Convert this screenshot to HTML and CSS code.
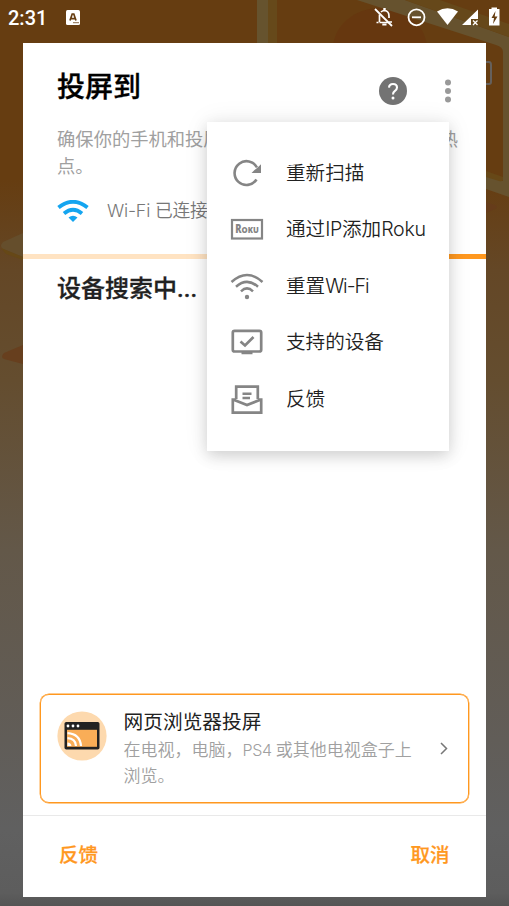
FILE: index.html
```html
<!DOCTYPE html>
<html lang="zh-CN">
<head>
<meta charset="utf-8">
<title>投屏到</title>
<link rel="stylesheet" href="styles.css">
</head>
<body>
<div class="screen">
  <svg class="backdrop" viewBox="0 0 509 906" aria-hidden="true">
    <path d="M268 0H277V43H268Z" fill="#66491a"/>
    <path d="M257 0H268V43H257Z" fill="#66532e"/>
    <ellipse cx="380" cy="49" rx="47" ry="41" fill="#66370f"/>
    <path d="M357 0H405L509 37V197L486 189V175L503 181V52Q503 47 496 45Z" fill="#66522e"/>
    <path d="M405 0H440L509 24V37Z" fill="#66481a"/>
    <path d="M480 62H489Q491 62 491 65V82Q491 84 489 84H480" fill="none" stroke="#65605c" stroke-width="2"/>
    <path d="M486 171L503 177V180Q502 182 499 181L486 177Z" fill="#674817"/>
    <path d="M486 202L495 205Q499 207 495 209L486 213Z" fill="#663c1a"/>
    <path d="M23 233L3 242Q-1 246 3 249L23 257Z" fill="#654e2c"/>
    <path d="M1 248L23 257V260L6 254Z" fill="#664817"/>
    <path d="M23 345L4 353Q0 357 4 359L23 364Z" fill="#673f1e"/>
  </svg>

  <header class="status">
    <span class="time">2:31</span>
    <svg class="app" width="14" height="15" viewBox="0 0 14 15"><rect width="14" height="15" rx="1.5" fill="#fff"/><path d="M4 10.5L6.2 4H7.8L10 10.5M5 8.6H9" fill="none" stroke="#663d11" stroke-width="1.7"/><path d="M7 12.7H13" stroke="#8a6b4a"/></svg>
    <svg class="indicators" width="130" height="22" viewBox="370 6 130 22" fill="none" stroke="#fff">
      <path d="M379.5 22.500H389M378.500 22.500H376.500M379.500 22V14.500M381 12Q382.500 10.500 384.500 10.500Q389 11 389 16V18M389 22H392" stroke-width="1.7"/>
      <path d="M375 9L392 26" stroke-width="1.8"/>
      <path d="M384.500 8V11" stroke-width="2.4"/><path d="M382.300 24.500H386.500" stroke-width="2"/>
      <circle cx="416.500" cy="17.300" r="8" stroke-width="1.8"/><path d="M412 17.300H421" stroke-width="1.8"/>
      <path d="M437 11.500Q447.500 4.800 458 11.500L447.500 25Z" fill="#fff" stroke="none"/>
      <path d="M462 25L478 9.500V19H471V25Z" fill="#fff" stroke="none"/><path d="M473 20.500L477.500 25M477.500 20.500L473 25" stroke-width="1.3"/>
      <path d="M489 9H491.500V7.500H497V9H499.500V25.500H489Z" fill="#fff" stroke="none"/><path d="M495.500 11L491.500 18H494L493 24L497.500 16.500H494.700Z" fill="#663d11" stroke="none"/>
    </svg>
  </header>

  <main class="dialog">
    <section class="heading">
      <h1>投屏到</h1>
      <div class="actions">
        <svg width="28" height="28" viewBox="0 0 28 28"><circle cx="14" cy="14" r="14" fill="#737373"/><path d="M10 10.600Q10.200 7 14 7Q18 7 18 10.500Q18 12.500 15.700 14.200Q14 15.500 14 17.500" fill="none" stroke="#fff" stroke-width="2.100"/><circle cx="14" cy="21" r="1.500" fill="#fff"/></svg>
        <svg width="6" height="24" viewBox="0 0 6 24" fill="#999"><circle cx="3" cy="3.500" r="3"/><circle cx="3" cy="12" r="3"/><circle cx="3" cy="20.500" r="3"/></svg>
      </div>
    </section>
    <div class="hint">
      <p class="spread"><span>确保你的手机和投屏设备连接到同一</span><span>Wi-Fi或者热</span></p>
      <p>点。</p>
    </div>
    <div class="network">
      <svg width="32" height="22" viewBox="0 0 32 22" fill="none" stroke="#14a5f0"><path d="M1.500 7.500Q16-4 30.500 7.500" stroke-width="3.800"/><path d="M7 13.500Q16 6 25 13.500" stroke-width="3.800"/><path d="M11.500 17.500Q16 14 20.500 17.500L16 22Z" fill="#14a5f0" stroke="none"/></svg>
      <span>Wi-Fi 已连接</span>
    </div>
    <div class="progress"></div>
    <h2>设备搜索中...</h2>

    <section class="browser">
      <svg class="cast" width="50" height="50" viewBox="0 0 50 50"><circle cx="25" cy="25" r="24.600" fill="#fdd9ae"/><rect x="7.500" y="11" width="35" height="27.500" rx="1.800" fill="#222"/><rect x="10" y="18.800" width="30" height="17" fill="#f9ad57"/><g fill="#fff"><circle cx="11" cy="15" r="1.400"/><circle cx="16" cy="15" r="1.400"/><circle cx="21" cy="15" r="1.400"/><path d="M10.500 31.500Q14 31.500 14.500 35H10.500Z"/></g><path d="M10.500 27.200Q18.500 27.500 19 35M10.500 22.200Q23 23 24 35" fill="none" stroke="#fff" stroke-width="2.200"/></svg>
      <div class="copy"><h3>网页浏览器投屏</h3><p>在电视，电脑，<span class="latin">PS4</span> 或其他电视盒子上<br>浏览。</p></div>
      <svg class="chevron" width="8" height="13" viewBox="0 0 8 13"><path d="M1 1L6.500 6.500L1 12" fill="none" stroke="#777" stroke-width="1.500"/></svg>
    </section>
    <footer><button>反馈</button><button>取消</button></footer>
  </main>

  <nav class="menu">
    <div class="item"><svg width="34" height="34" viewBox="0 0 34 34" fill="none" stroke="#858585"><path d="M26.500 23.500A11.900 11.900 0 1 1 27 11.500" stroke-width="2.600"/><path d="M31 8.300V17H21.500L24.500 14Q27 12.500 31 8.300Z" fill="#858585" stroke="none"/></svg><span>重新扫描</span></div>
    <div class="item"><svg width="34" height="34" viewBox="0 0 34 34"><rect x="2" y="8" width="30" height="18.500" fill="none" stroke="#858585" stroke-width="2.200"/><text x="5.300" y="21" class="brand" textLength="23.500" lengthAdjust="spacingAndGlyphs">R<tspan class="small-caps">OKU</tspan></text></svg><span>通过<span class="latin">IP</span>添加<span class="latin">Roku</span></span></div>
    <div class="item"><svg width="34" height="34" viewBox="0 0 34 34" fill="none" stroke="#858585" stroke-width="2.500"><path d="M1.500 13Q17-1 32.500 13M6 17.700Q17 8 28 17.700M11 22.300Q17 16.500 23 22.300"/><circle cx="17" cy="28" r="2.200" fill="#858585" stroke="none"/></svg><span>重置<span class="latin wifi">Wi-Fi</span></span></div>
    <div class="item"><svg width="34" height="34" viewBox="0 0 34 34" fill="none" stroke="#858585" stroke-width="2.700"><rect x="2.800" y="5.800" width="28.400" height="20.700" rx="1.800"/><path d="M11.500 28H22.500M10.500 16.500L15 20.500L23.500 12"/></svg><span>支持的设备</span></div>
    <div class="item"><svg width="34" height="34" viewBox="0 0 34 34" fill="none" stroke="#858585" stroke-width="2.700"><path d="M6.200 17V4.700H27.800V17M6 17.500H2.800V30.700H31.200V17.500H28M3 17.500L17 23L31 17.500"/><path d="M12.500 11.800H21.500M12.500 16H20" stroke-width="2.500"/></svg><span>反馈</span></div>
  </nav>
</div>
</body>
</html>
```
FILE: styles.css
```css
* { box-sizing: border-box; }
html, body { margin: 0; }
body, button { font-family: Roboto, "Noto Sans CJK SC", sans-serif; }
h1, h2, h3, p { margin: 0; font-weight: 400; }
svg { display: block; flex: none; }

.screen {
  position: relative;
  width: 509px;
  height: 906px;
  overflow: hidden;
  background: linear-gradient(#663d11 0, #663d11 180px, #644726 270px, #644d2f 380px, #635849 550px, #615d58 740px, #606060 830px, #5d5d5d 893px, #545454 906px);
}
.backdrop { position: absolute; inset: 0; width: 509px; height: 906px; }

.status { position: relative; display: flex; align-items: center; height: 43px; padding: 0 9px 9px 8px; color: #fff; }
.time { width: 58px; padding-top: 1px; font-size: 20px; font-weight: 500; }
.indicators { margin-left: auto; }

.dialog {
  position: relative;
  display: flex;
  flex-direction: column;
  width: 463.400px;
  height: 854px;
  margin-left: 22.600px;
  background: #fff;
}
.heading { display: flex; justify-content: space-between; height: 83px; padding: 0 35px 0 34.500px; }
h1 { padding-top: 24px; font-size: 28px; line-height: 42px; font-weight: 500; color: #000; -webkit-text-stroke: .3px; }
.actions { display: flex; align-items: center; gap: 38px; height: 96px; }

.hint { height: 54px; padding: 0 28px 0 34.500px; font-size: 18.300px; line-height: 27px; color: #a0a0a0; font-weight: 350; }
.spread { display: flex; justify-content: space-between; white-space: nowrap; }
.network { display: flex; align-items: center; gap: 18px; height: 36px; padding-left: 34.500px; margin-top: 13px; font-family: Inter, "Noto Sans CJK SC", sans-serif; font-size: 17.800px; font-weight: 350; color: #777; }
.network span { padding-bottom: 4px; letter-spacing: -.2px; }
.progress { height: 5px; margin-top: 25px; background: linear-gradient(90deg, #ffe3c2 0 300px, #ff981f 300px); }
h2 { padding: 12px 0 0 34.500px; font-size: 24px; line-height: 36px; font-weight: 500; color: #212121; -webkit-text-stroke: .3px; }

.browser {
  display: flex;
  height: 109px;
  margin: auto 17px 12px;
  padding: 15px 20px 0 16px;
  border: 1px solid #ff981f;
  border-radius: 9px;
  box-shadow: 0 0 0 .4px #ff981f;
}
.cast { margin-top: 1px; }
.copy { margin-left: 17px; white-space: nowrap; }
h3 { font-size: 19.700px; line-height: 26px; font-weight: 400; color: #212121; }
.copy p { padding-top: 1px; font-size: 17px; line-height: 26px; font-weight: 350; color: #a0a0a0; }
.copy .latin { font-size: 16px; letter-spacing: -.4px; }
.chevron { margin: 32px 0 0 auto; }
footer { display: flex; justify-content: space-between; height: 82px; padding: 0 36.500px 6px; border-top: 1.500px solid #e9e9e9; }
button { padding: 0; border: 0; background: none; color: #ff981f; font-size: 19.500px; font-weight: 500; -webkit-text-stroke: .25px; }

.latin { font-family: Inter, sans-serif; letter-spacing: -.3px; }
.wifi { letter-spacing: -1px; }
.menu {
  position: absolute;
  left: 207px;
  top: 122px;
  width: 242px;
  height: 329px;
  padding: 22.500px 0 0 22.500px;
  background: #fff;
  box-shadow: 0 5px 14px rgba(0,0,0,.15), 0 0 24px rgba(0,0,0,.08);
}
.item { display: flex; align-items: center; gap: 22.500px; height: 56.500px; font-size: 19.600px; font-weight: 350; color: #212121; white-space: nowrap; }
.item > span { padding-bottom: 3px; }
.brand { fill: #858585; font-family: "Open Sans", sans-serif; font-size: 11.500px; font-weight: 800; }
.small-caps { font-size: 9.500px; }
```
